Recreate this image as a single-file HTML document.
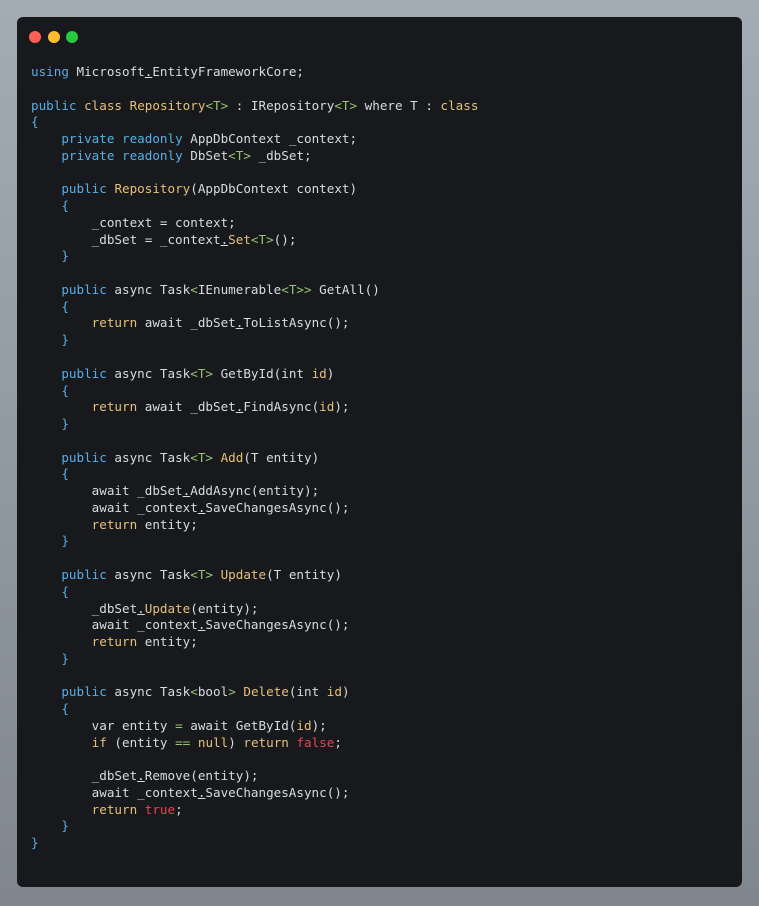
<!DOCTYPE html><html><head><style>
body{margin:0;width:759px;height:906px;background:linear-gradient(180deg,#a3acb5,#7f868e);overflow:hidden}
.card{position:absolute;left:17px;top:17px;width:725px;height:870px;background:#18191c;border-radius:6px}
.d{position:absolute;top:14px;width:12px;height:12px;border-radius:50%}
pre{position:absolute;left:14px;top:47px;margin:0;font-family:"DejaVu Sans Mono","Liberation Mono",monospace;font-size:12.6px;line-height:16.76px;color:#d8dbe0}
.k{color:#57aee6}.y{color:#e5c07b}.g{color:#98c379}.r{color:#e5454f}.u{text-decoration:underline}
</style></head><body><div class="card">
<div class="d" style="left:12px;background:#fe5f57"></div><div class="d" style="left:31px;background:#febc2e"></div><div class="d" style="left:49px;background:#28c840"></div>
<pre><span class="k">using</span> Microsoft<span class="u">.</span>EntityFrameworkCore;

<span class="k">public</span> <span class="y">class</span> <span class="y">Repository</span><span class="g">&lt;T&gt;</span> : IRepository<span class="g">&lt;T&gt;</span> where T : <span class="y">class</span>
<span class="k">{</span>
    <span class="k">private readonly</span> AppDbContext _context;
    <span class="k">private readonly</span> DbSet<span class="g">&lt;T&gt;</span> _dbSet;

    <span class="k">public</span> <span class="y">Repository</span>(AppDbContext context)
    <span class="k">{</span>
        _context = context;
        _dbSet = _context<span class="u">.</span><span class="y">Set</span><span class="g">&lt;T&gt;</span>();
    <span class="k">}</span>

    <span class="k">public</span> async Task<span class="g">&lt;</span>IEnumerable<span class="g">&lt;T&gt;&gt;</span> GetAll()
    <span class="k">{</span>
        <span class="y">return</span> await _dbSet<span class="u">.</span>ToListAsync();
    <span class="k">}</span>

    <span class="k">public</span> async Task<span class="g">&lt;T&gt;</span> GetById(int <span class="y">id</span>)
    <span class="k">{</span>
        <span class="y">return</span> await _dbSet<span class="u">.</span>FindAsync(<span class="y">id</span>);
    <span class="k">}</span>

    <span class="k">public</span> async Task<span class="g">&lt;T&gt;</span> <span class="y">Add</span>(T entity)
    <span class="k">{</span>
        await _dbSet<span class="u">.</span>AddAsync(entity);
        await _context<span class="u">.</span>SaveChangesAsync();
        <span class="y">return</span> entity;
    <span class="k">}</span>

    <span class="k">public</span> async Task<span class="g">&lt;T&gt;</span> <span class="y">Update</span>(T entity)
    <span class="k">{</span>
        _dbSet<span class="u">.</span><span class="y">Update</span>(entity);
        await _context<span class="u">.</span>SaveChangesAsync();
        <span class="y">return</span> entity;
    <span class="k">}</span>

    <span class="k">public</span> async Task<span class="g">&lt;</span>bool<span class="g">&gt;</span> <span class="y">Delete</span>(int <span class="y">id</span>)
    <span class="k">{</span>
        var entity <span class="g">=</span> await GetById(<span class="y">id</span>);
        <span class="y">if</span> (entity <span class="g">==</span> <span class="y">null</span>) <span class="y">return</span> <span class="r">false</span>;

        _dbSet<span class="u">.</span>Remove(entity);
        await _context<span class="u">.</span>SaveChangesAsync();
        <span class="y">return</span> <span class="r">true</span>;
    <span class="k">}</span>
<span class="k">}</span></pre>
</div></body></html>
